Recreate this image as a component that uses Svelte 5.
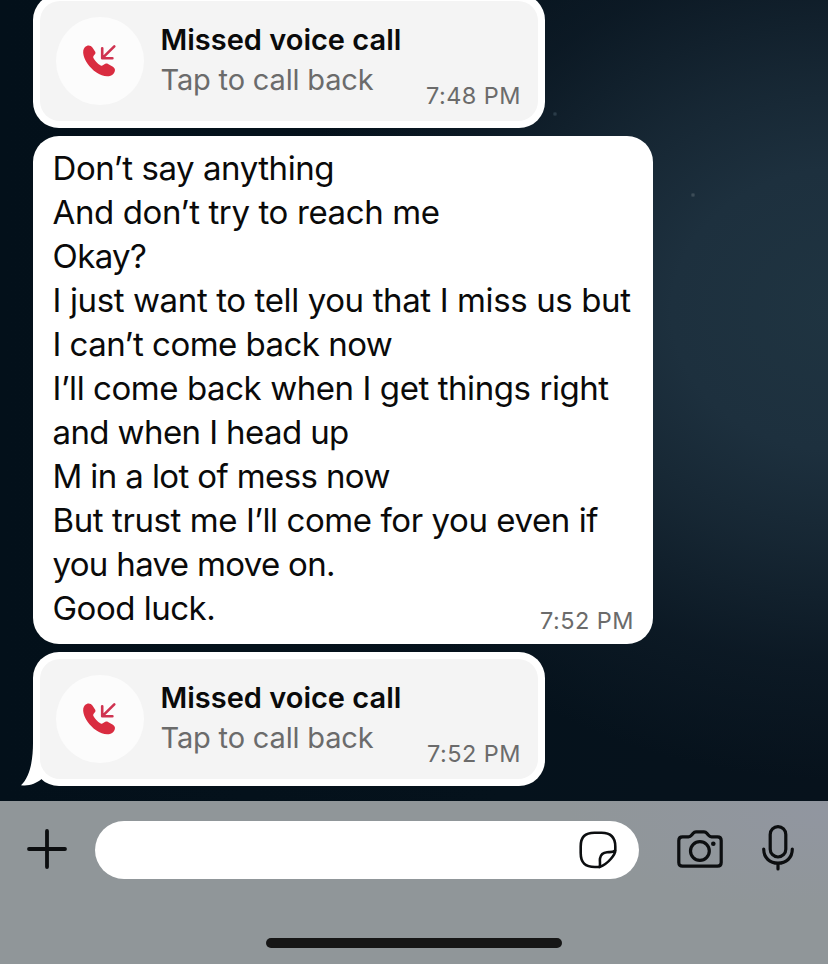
<script>
  // letter spacing per line, in px
  const lines = [
    { text: 'Don’t say anything', spacing: -0.44 },
    { text: 'And don’t try to reach me', spacing: -0.38 },
    { text: 'Okay?', spacing: -0.6 },
    { text: 'I just want to tell you that I miss us but', spacing: -0.38 },
    { text: 'I can’t come back now', spacing: -0.53 },
    { text: 'I’ll come back when I get things right', spacing: -0.43 },
    { text: 'and when I head up', spacing: -0.6 },
    { text: 'M in a lot of mess now', spacing: -0.61 },
    { text: 'But trust me I’ll come for you even if', spacing: -0.42 },
    { text: 'you have move on.', spacing: -0.67 },
    { text: 'Good luck.', spacing: -0.5 },
  ];
</script>

{#snippet missedCall(time, last)}
  <div class="bubble call">
    {#if last}
      <svg class="tail" width="24" height="46" viewBox="0 0 24 46">
        <path d="M12 0C12.3 20 9 37 0 45.2C8 46.4 15 43.5 20 39.6L24 30V0Z" />
      </svg>
    {/if}
    <div class="call-card">
      <div class="call-icon">
        <svg width="36" height="36" viewBox="0 0 36 36">
          <path
            class="handset"
            d="M3 4C5.2 1.7 8.9 1.9 10.4 4.5L13.2 8.7C14.6 11.2 10.4 12.4 11.4 14.9C12.8 17.8 15.4 20.4 18.7 22.4C21.2 23.7 22.6 19.7 25.2 20.6L30.9 23.8C33.5 25.4 33.6 28.2 31.5 30.7C27.6 34.8 21 33.9 14.1 29.3C7.4 24.4 2.8 18 1.5 12C0.8 8.7 1.1 6.2 3 4Z"
          />
          <path class="arrow" d="M32.3 3.3L20.4 15.2M20.2 5.2V15.3H30.4" />
        </svg>
      </div>
      <div class="call-text">
        <div class="call-title">Missed voice call</div>
        <div class="call-sub">Tap to call back</div>
      </div>
      <div class="time">{time}</div>
    </div>
  </div>
{/snippet}

<div class="screen">
  <main class="chat">
    {@render missedCall('7:48 PM', false)}
    <div class="bubble message">
      <div class="lines">
        {#each lines as line}
          <div class="line" style="letter-spacing: {line.spacing}px">{line.text}</div>
        {/each}
      </div>
      <div class="time">7:52 PM</div>
    </div>
    {@render missedCall('7:52 PM', true)}
  </main>

  <footer class="composer">
    <div class="composer-row">
      <svg class="plus" width="40" height="40" viewBox="0 0 40 40">
        <path d="M20 2V38M2 20H38" />
      </svg>
      <div class="input">
        <svg width="38" height="38" viewBox="0 0 38 38">
          <path d="M20.5 36H16C6 36 1.7 31.5 1.7 22V15.5C1.7 6 6 1.7 15.5 1.7H22.5C32 1.7 36.3 6 36.3 15.5V19.5C36.3 23 30 32.5 20.5 36Z" />
          <path d="M20.5 36C21.7 33.5 20.5 30.5 21 27.5C21.7 23.5 24 21.5 28 21.2C31 21 34.5 21.7 36 19.5" />
        </svg>
      </div>
      <svg class="camera" width="46" height="38" viewBox="0 0 46 38">
        <path d="M5.5 6.8H11.5C13 6.8 13.7 6.2 14.7 5L16.2 3.2C17 2.2 17.8 1.8 19 1.8H27C28.2 1.8 29 2.2 29.8 3.2L31.3 5C32.3 6.2 33 6.8 34.5 6.8H40.5C42.9 6.8 44.2 8.1 44.2 10.5V32.5C44.2 34.9 42.9 36.2 40.5 36.2H5.5C3.1 36.2 1.8 34.9 1.8 32.5V10.5C1.8 8.1 3.1 6.8 5.5 6.8Z" />
        <circle cx="22.9" cy="21" r="9.4" />
        <circle class="dot" cx="36.3" cy="13.8" r="2.3" />
      </svg>
      <svg class="mic" width="32" height="46" viewBox="0 0 32 46">
        <rect x="8.2" y="1.7" width="15.6" height="30.3" rx="7.8" />
        <path d="M1.7 24C1.7 33 8 38.2 16 38.2S30.3 33 30.3 24M16 38.2V44" />
      </svg>
    </div>
    <div class="home-bar"></div>
  </footer>
</div>

<style>
  :global(body) {
    background: #04111a;
  }

  .screen {
    width: 828px;
    height: 964px;
    display: flex;
    flex-direction: column;
    overflow: hidden;
    font-family: Inter, "Liberation Sans", sans-serif;
    color: #0a0a0a;
    white-space: nowrap;
  }

  .chat {
    height: 801px;
    box-sizing: border-box;
    flex-shrink: 0;
    display: flex;
    flex-direction: column;
    justify-content: flex-end;
    align-items: flex-start;
    gap: 8px;
    padding: 0 33px 15px;
    background:
      radial-gradient(circle at 693px 195px, #3c4c57 0 1px, transparent 2.5px),
      radial-gradient(circle at 555px 114px, #2a3b48 0 1px, transparent 2.5px),
      radial-gradient(ellipse 560px 470px at 840px 310px, #1f3441 0%, #1d303e 30%, rgba(24, 41, 54, 0.9) 50%, rgba(15, 29, 41, 0.65) 75%, rgba(8, 20, 30, 0) 100%),
      linear-gradient(90deg, #03101a 0%, #05121c 60%, #07121c 100%);
  }

  .bubble {
    position: relative;
    box-sizing: border-box;
    flex-shrink: 0;
    background: #fff;
    border-radius: 26px;
  }

  /* ── Missed call ── */
  .call {
    width: 512px;
    height: 134px;
    padding: 7px;
  }

  .call-card {
    position: relative;
    height: 120px;
    box-sizing: border-box;
    display: flex;
    align-items: center;
    padding: 0 17px 0 16px;
    border-radius: 20px;
    background: #f4f4f4;
  }

  .call-icon {
    width: 88px;
    height: 88px;
    flex-shrink: 0;
    display: flex;
    align-items: center;
    justify-content: center;
    border-radius: 50%;
    background: #fcfcfc;
  }

  .handset { fill: #d92c40; }

  .arrow {
    fill: none;
    stroke: #cf3350;
    stroke-width: 2.6;
    stroke-linecap: round;
    stroke-linejoin: round;
  }

  .call-text {
    flex: 1;
    padding: 0 0 2px 16.5px;
    line-height: 40px;
  }

  .call-title {
    font-size: 29px;
    font-weight: 600;
  }

  .call-sub {
    font-size: 29px;
    letter-spacing: -0.17px;
    color: #6b6b6b;
  }

  .time {
    align-self: flex-end;
    font-size: 23.5px;
    line-height: 28px;
    letter-spacing: 0.45px;
    color: #6b6b6b;
  }

  .call .time { padding-bottom: 11px; }

  .tail {
    position: absolute;
    left: -12px;
    bottom: 0;
    fill: #fff;
  }

  /* ── Text message ── */
  .message {
    width: 620px;
    height: 508px;
    display: flex;
    justify-content: space-between;
    padding: 10px 19px 9px 19.5px;
  }

  .lines {
    width: 0;
    font-size: 33px;
    line-height: 44px;
  }

  /* ── Composer ── */
  .composer {
    height: 163px;
    box-sizing: border-box;
    flex-shrink: 0;
    padding: 20px 34px 0 27px;
    background:
      radial-gradient(ellipse 260px 100px at 828px 10px, #9196a0 0%, rgba(145, 150, 160, 0) 100%),
      #909699;
  }

  .composer-row {
    display: flex;
    align-items: center;
  }

  .composer-row svg {
    flex-shrink: 0;
    fill: none;
    stroke: #0c0e10;
    stroke-width: 3.2;
    stroke-linecap: round;
    stroke-linejoin: round;
  }

  .composer-row .plus {
    stroke-width: 3.8;
    margin-top: -3px;
  }

  .input {
    width: 544px;
    height: 58px;
    box-sizing: border-box;
    display: flex;
    align-items: center;
    justify-content: flex-end;
    margin-left: 28px;
    padding: 0 22px 1px 0;
    border-radius: 29px;
    background: #fff;
  }

  .input svg { stroke-width: 2.6; }

  .camera {
    margin-left: 38px;
    margin-top: -2px;
  }

  .composer-row .dot {
    fill: #0c0e10;
    stroke: none;
  }

  .mic {
    margin-left: 39px;
    margin-top: -5px;
  }

  .home-bar {
    width: 296px;
    height: 10px;
    margin: 59px 0 0 239px;
    border-radius: 5px;
    background: #161616;
  }
</style>
